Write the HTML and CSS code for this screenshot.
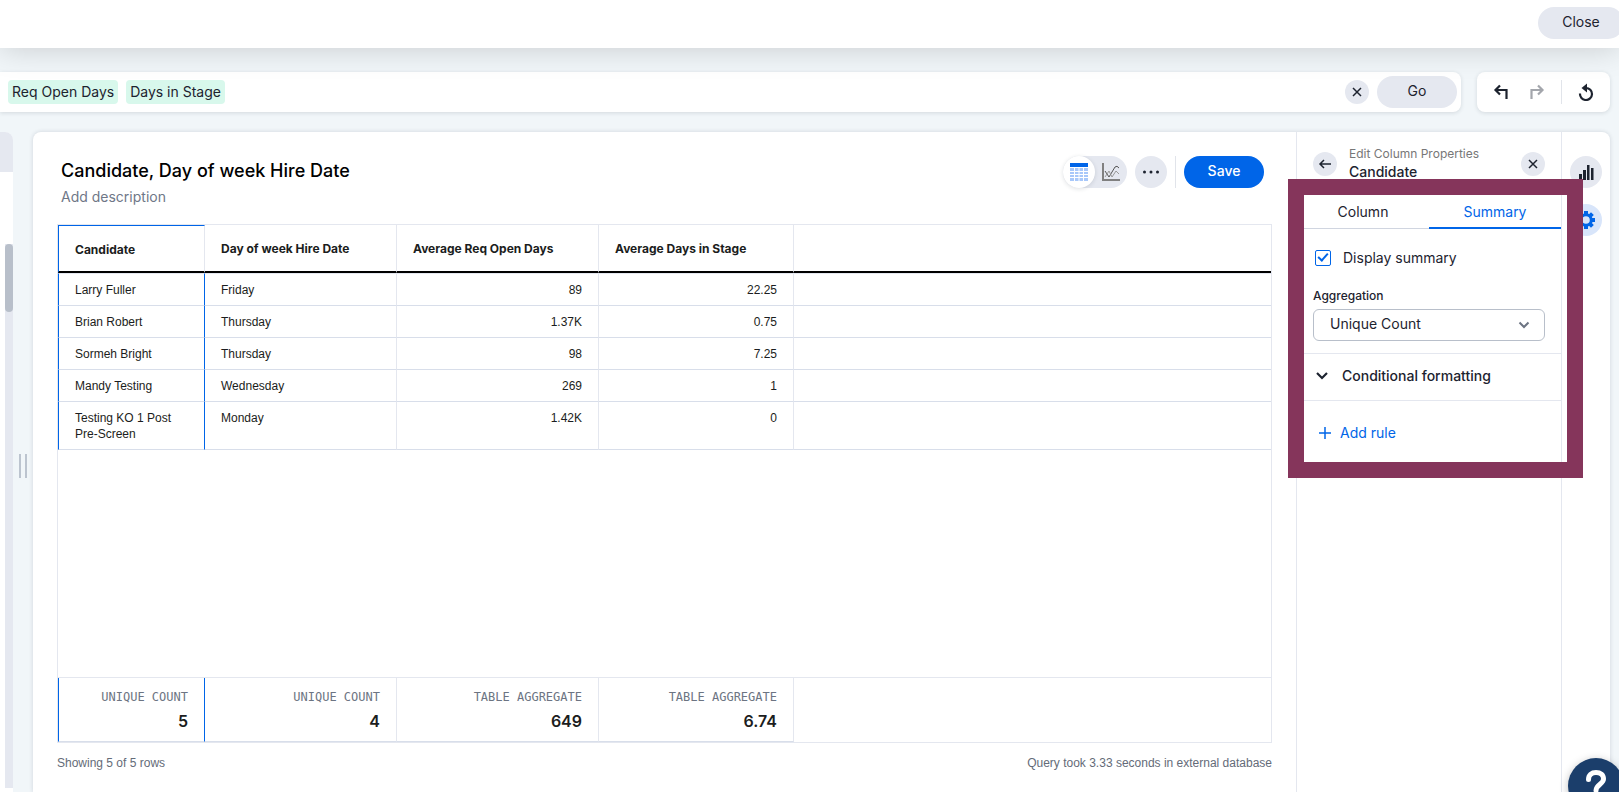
FILE: index.html
```html
<!DOCTYPE html>
<html lang="en">
<head>
	<meta charset="UTF-8">
	<meta name="viewport" content="width=device-width, initial-scale=1">
	<title>Candidate, Day of week Hire Date</title>
	<link rel="stylesheet" href="styles.css">
</head>
<body>
	<header class="topbar">
		<button class="btn btn-close" type="button">Close</button>
	</header>

	<div class="search-row">
		<div class="search-bar">
			<span class="chip">Req Open Days</span>
			<span class="chip">Days in Stage</span>
			<button class="round small push" type="button" aria-label="Clear">
				<svg width="12" height="12" viewBox="0 0 12 12"><path d="M2 2l8 8M10 2l-8 8"/></svg>
			</button>
			<button class="btn" type="button">Go</button>
		</div>
		<div class="history">
			<button class="plain" type="button" aria-label="Undo">
				<svg width="16" height="16" viewBox="0 0 16 16"><path class="thick" d="M13.500 15V6H3M7 1.500L2.500 6 7 10.500"/></svg>
			</button>
			<button class="plain faded" type="button" aria-label="Redo" disabled>
				<svg width="16" height="16" viewBox="0 0 16 16"><path class="thick" d="M2.500 15V6H13M9 1.500L13.500 6 9 10.500"/></svg>
			</button>
			<span class="rule"></span>
			<button class="plain" type="button" aria-label="Reset">
				<svg width="16" height="18" viewBox="0 0 16 18"><path class="thick" d="M2 10.500A6 6 0 1 0 8 5H7"/><path class="solid" d="M9 .5v9L3.500 5z"/></svg>
			</button>
		</div>
	</div>

	<main class="workspace">
		<aside class="data-panel">
			<div class="data-head"></div>
			<div class="data-search"></div>
			<div class="data-list"><span class="thumb"></span></div>
		</aside>
		<div class="grip"></div>

		<div class="card">
			<section class="answer">
				<div class="answer-head">
					<div class="titles">
						<h1>Candidate, Day of week Hire Date</h1>
						<p>Add description</p>
					</div>
					<div class="toggle">
						<button class="on" type="button" aria-label="Table view">
							<svg width="18" height="18" viewBox="0 0 18 18">
								<path class="cells" d="M0 5h18v13H0z"/>
								<path class="solid" d="M0 0h18v4H0z"/>
								<path class="grid-lines" d="M4.500 5v13M9 5v13M13.500 5v13M0 8.500h18M0 11.500h18M0 14.500h18"/>
							</svg>
						</button>
						<button type="button" aria-label="Chart view">
							<svg width="18" height="18" viewBox="0 0 18 18">
								<path class="axis" d="M1 0v17h17"/>
								<path class="trend" d="M3 8l4 6 6-10q2-2 4 1"/>
								<path class="trend light" d="M3 14l4-6 3 6 4-6 3 3"/>
							</svg>
						</button>
					</div>
					<button class="round" type="button" aria-label="More">
						<svg width="16" height="4" viewBox="0 0 16 4"><g class="solid"><circle cx="1.500" cy="2" r="1.500"/><circle cx="8" cy="2" r="1.500"/><circle cx="14.500" cy="2" r="1.500"/></g></svg>
					</button>
					<span class="rule tall"></span>
					<button class="btn primary" type="button">Save</button>
				</div>

				<div class="table-box">
					<table>
						<colgroup>
							<col class="c1"><col class="c2"><col class="c3"><col class="c4"><col>
						</colgroup>
						<thead>
							<tr><th class="picked">Candidate</th><th>Day of week Hire Date</th><th>Average Req Open Days</th><th>Average Days in Stage</th><td></td></tr>
						</thead>
						<tbody>
							<tr class="first"><td class="picked">Larry Fuller</td><td>Friday</td><td class="num">89</td><td class="num">22.25</td><td></td></tr>
							<tr><td class="picked">Brian Robert</td><td>Thursday</td><td class="num">1.37K</td><td class="num">0.75</td><td></td></tr>
							<tr><td class="picked">Sormeh Bright</td><td>Thursday</td><td class="num">98</td><td class="num">7.25</td><td></td></tr>
							<tr><td class="picked">Mandy Testing</td><td>Wednesday</td><td class="num">269</td><td class="num">1</td><td></td></tr>
							<tr><td class="picked">Testing KO 1 Post<br>Pre-Screen</td><td>Monday</td><td class="num">1.42K</td><td class="num">0</td><td></td></tr>
							<tr class="filler"><td colspan="5"></td></tr>
						</tbody>
						<tfoot>
							<tr>
								<td class="picked"><span>UNIQUE COUNT</span><strong>5</strong></td>
								<td><span>UNIQUE COUNT</span><strong>4</strong></td>
								<td><span>TABLE AGGREGATE</span><strong>649</strong></td>
								<td><span>TABLE AGGREGATE</span><strong>6.74</strong></td>
								<td></td>
							</tr>
						</tfoot>
					</table>
				</div>

				<div class="status">
					<span>Showing 5 of 5 rows</span>
					<span>Query took 3.33 seconds in external database</span>
				</div>
			</section>

			<aside class="props">
				<div class="props-head">
					<button class="round small" type="button" aria-label="Back">
						<svg width="14" height="12" viewBox="0 0 14 12"><path d="M13 6H2M6 2L2 6l4 4"/></svg>
					</button>
					<div class="props-title">
						<small>Edit Column Properties</small>
						<h2>Candidate</h2>
					</div>
					<button class="round small" type="button" aria-label="Close panel">
						<svg width="12" height="12" viewBox="0 0 12 12"><path d="M2 2l8 8M10 2l-8 8"/></svg>
					</button>
				</div>
				<div class="tabs" role="tablist">
					<button type="button" role="tab">Column</button>
					<button class="active" type="button" role="tab" aria-selected="true">Summary</button>
				</div>
				<div class="settings">
					<label class="check"><input type="checkbox" checked>Display summary</label>
					<label class="field-label" for="aggregation">Aggregation</label>
					<div class="select-box">
						<select id="aggregation"><option>Unique Count</option></select>
						<svg width="12" height="8" viewBox="0 0 12 8"><path d="M1.500 1.500l4.500 4.500 4.500-4.500"/></svg>
					</div>
				</div>
				<button class="section" type="button">
					<svg width="12" height="8" viewBox="0 0 12 8"><path class="thick" d="M1 1l5 5 5-5"/></svg>
					Conditional formatting
				</button>
				<button class="add" type="button">
					<svg width="14" height="14" viewBox="0 0 14 14"><path d="M7 1v12M1 7h12"/></svg>
					Add rule
				</button>
				<div class="highlight"></div>
			</aside>

			<nav class="rail">
				<button class="round" type="button" aria-label="Chart type">
					<svg width="16" height="16" viewBox="0 0 16 16"><path class="solid" d="M1 10h3v6H1zM5 6h3v10H5zM9 1h2.500v15H9zM13 4h2.500v12H13z"/></svg>
				</button>
				<button class="round selected" type="button" aria-label="Settings">
					<svg width="18" height="18" viewBox="0 0 18 18">
						<circle class="cog" cx="9" cy="9" r="5.300"/>
						<path class="cog teeth" d="M9 0v3M9 15v3M0 9h3M15 9h3M2.600 2.600l2.200 2.200M13.200 13.200l2.200 2.200M2.600 15.400l2.200-2.200M13.200 4.800l2.200-2.200"/>
					</svg>
				</button>
			</nav>
		</div>
	</main>

	<button class="help" type="button" aria-label="Help">
		<svg width="24" height="32" viewBox="0 0 24 32"><path d="M4.500 9.500C4.500 5 7.500 2.500 12 2.500s7.500 2.500 7.500 6.500c0 5-7.500 5.500-7.500 11.500"/><circle cx="12" cy="28" r="2.500"/></svg>
	</button>
</body>
</html>
```

FILE: styles.css
```css
*,*:after,*:before{box-sizing: border-box;}
html,body{height: 100%;}
body{
	margin: 0;
	display: flex;
	flex-direction: column;
	overflow: hidden;
	background-color: #f1f6f9;
	color: #1d232f;
	font: 14px/20px Inter, "Liberation Sans", sans-serif;
}
h1,h2,p{margin: 0;}
button{
	border: 0;
	padding: 0;
	background: none;
	color: inherit;
	font: inherit;
}
svg{
	display: block;
	flex: none;
	fill: none;
	stroke: currentColor;
	stroke-width: 1.5;
}
.thick{stroke-width: 2.2;}
.solid{fill: currentColor;stroke: none;}

/* buttons */
.btn{
	flex: none;
	min-width: 80px;
	height: 32px;
	padding: 0 20px 2px;
	border-radius: 16px;
	background-color: #e5e8f0;
}
.btn.primary{background-color: #0065e8;color: #fff;font-weight: 500;}
.round{
	flex: none;
	display: flex;
	align-items: center;
	justify-content: center;
	width: 32px;
	height: 32px;
	border-radius: 50%;
	background-color: #e5e8f0;
}
.round.small{width: 24px;height: 24px;}
.round.selected{background-color: #d8e5fa;color: #0065e8;}
.rule{flex: none;width: 1px;height: 24px;background-color: #e1e4ea;}
.rule.tall{height: 32px;}

/* top */
.topbar{
	position: relative;
	z-index: 2;
	flex: none;
	display: flex;
	justify-content: flex-end;
	height: 48px;
	padding-top: 7px;
	background-color: #fff;
	box-shadow: 0 0 32px rgba(0,0,0,.18);
}
.btn-close{width: 86px;margin-right: -5px;}
.search-row{
	flex: none;
	display: flex;
	gap: 16px;
	padding: 24px 9px 20px 0;
}
.search-bar,.history{
	display: flex;
	align-items: center;
	height: 40px;
	background-color: #fff;
	box-shadow: 0 1px 4px rgba(30,40,60,.14);
}
.search-bar{
	flex: 1;
	gap: 8px;
	padding: 0 4px 0 8px;
	border-radius: 0 8px 8px 0;
}
.push{margin-left: auto;}
.chip{
	height: 24px;
	padding: 0 4px;
	border-radius: 4px;
	background-color: #d8f8ec;
	line-height: 24px;
}
.history{
	gap: 16px;
	padding: 0 16px;
	border-radius: 8px;
}
.faded{margin-left: 4px;color: #a3a6ac;}

/* left panel */
.workspace{
	flex: 1;
	min-height: 0;
	display: flex;
}
.data-panel{
	flex: none;
	display: flex;
	flex-direction: column;
	width: 13px;
	border-radius: 0 8px 0 0;
	overflow: hidden;
	background-color: #fff;
}
.data-head{height: 40px;background-color: #e5e8f0;}
.data-search{height: 72px;}
.data-list{
	flex: 1;
	margin: 0 0 4px 5px;
	background-color: #e5e8f0;
}
.thumb{
	display: block;
	height: 68px;
	border-radius: 4px;
	background-color: #b8bfca;
}
.grip{
	align-self: center;
	flex: none;
	width: 8px;
	height: 24px;
	margin: 8px 6px 0;
	border: solid #bcc4cf;
	border-width: 0 2px;
}

/* card */
.card{
	flex: 1;
	min-width: 0;
	display: flex;
	margin-right: 9px;
	border-radius: 8px 8px 0 0;
	background-color: #fff;
	box-shadow: 0 0 4px rgba(30,40,60,.16);
}
.answer{
	flex: 1;
	min-width: 0;
	display: flex;
	flex-direction: column;
	padding: 24px 24px 0;
}
.answer-head{
	display: flex;
	gap: 8px;
	height: 68px;
	padding-right: 8px;
}
.titles{flex: 1;padding: 3px 4px;}
.titles p{color: #6f7787;}
h1{
	margin-bottom: 4px;
	color: #000;
	font-size: 18px;
	font-weight: 500;
	line-height: 24px;
}
.toggle{
	display: flex;
	width: 64px;
	height: 32px;
	border-radius: 16px;
	background-color: #e5e8f0;
}
.toggle button{
	display: flex;
	align-items: center;
	justify-content: center;
	width: 32px;
	height: 32px;
	border-radius: 50%;
}
.toggle .on{
	background-color: #fff;
	box-shadow: 0 1px 4px rgba(30,40,60,.14);
	color: #0065e8;
}
.cells{fill: #a8c8fa;stroke: none;}
.grid-lines{stroke: #fff;stroke-width: 1;}
.axis{stroke: #808080;stroke-width: 2;}
.trend{stroke: #555;stroke-width: 1;}
.trend.light{stroke: #999;}

/* table */
.table-box{
	flex: 1;
	min-height: 0;
	border: 1px solid #e4e7ef;
}
table{
	width: 100%;
	height: 100%;
	table-layout: fixed;
	border-spacing: 0;
	color: #1b1d20;
	font: 12px/16px "Liberation Sans", sans-serif;
}
.c1{width: 147px;}
.c2{width: 192px;}
.c3{width: 202px;}
.c4{width: 195px;}
th,td{
	padding: 8px 16px 7px;
	border-right: 1px solid #e4e7ef;
	border-bottom: 1px solid #d8deea;
	text-align: left;
	vertical-align: top;
}
th:last-child,td:last-child{border-right: 0;}
thead tr{height: 48px;}
thead th,thead td{
	vertical-align: middle;
	padding: 2px 16px 0;
	border-bottom: 2px solid #000;
	font-family: Inter, sans-serif;
	font-weight: 700;
}
tbody tr{height: 32px;}
.first td{border-top: 1px solid #e4e7ef;}
.num{text-align: right;}
.picked{border-left: 1px solid #0065e8;border-right-color: #0065e8;}
thead .picked{border-top: 1px solid #0065e8;border-right-color: #e4e7ef;}
.filler{height: auto;}
.filler td{padding: 0;border-bottom-color: #e4e7ef;}
tfoot tr{height: 64px;}
tfoot td{padding: 11px 16px 0;text-align: right;}
tfoot td:last-child{border-bottom: 0;}
tfoot span{
	display: block;
	color: #6c7482;
	font: 12px/16px "DejaVu Sans Mono", monospace;
}
tfoot strong{
	display: block;
	margin-top: 4px;
	font: 600 16px/24px Inter, sans-serif;
}
.status{
	flex: none;
	display: flex;
	justify-content: space-between;
	height: 49px;
	padding-top: 12px;
	color: #646b78;
	font: 12px/16px "Liberation Sans", sans-serif;
}

/* column properties */
.props{
	position: relative;
	flex: none;
	width: 265px;
	border-left: 1px solid #e4e7ef;
}
.props-head{
	display: flex;
	align-items: center;
	gap: 12px;
	padding: 14px 16px 10px;
}
.props-title{flex: 1;}
.props-title small{
	display: block;
	color: #777;
	font-size: 12px;
	line-height: 16px;
}
h2{
	font-size: 14px;
	font-weight: 500;
	line-height: 20px;
}
.tabs{
	display: flex;
	height: 37px;
	border-bottom: 1px solid #d0d5e0;
}
.tabs button{flex: 1;padding-top: 4px;}
.tabs .active{height: 37px;padding-top: 5px;border-bottom: 2px solid #0065e8;color: #0065e8;}
.settings{padding: 19px 16px 12px;border-bottom: 1px solid #e4e7ef;}
.check{
	display: flex;
	align-items: center;
	gap: 12px;
	padding-left: 2px;
}
.check input{
	appearance: none;
	display: flex;
	justify-content: center;
	width: 16px;
	height: 16px;
	margin: 0;
	border: 1px solid #0065e8;
	border-radius: 2px;
}
.check input:checked:after{
	content: "";
	width: 6px;
	height: 10px;
	border: solid #0065e8;
	border-width: 0 2px 2px 0;
	transform: rotate(42deg);
}
.field-label{
	display: block;
	margin: 18px 0 3px;
	font-size: 12px;
	font-weight: 500;
}
.select-box{position: relative;}
.select-box select{
	appearance: none;
	display: block;
	width: 100%;
	height: 32px;
	padding: 0 16px 2px;
	border: 1px solid #b8bfca;
	border-radius: 6px;
	background-color: #fff;
	color: inherit;
	font: inherit;
}
.select-box svg{
	position: absolute;
	right: 15px;
	top: 12px;
	color: #6c7482;
	stroke-width: 2;
	pointer-events: none;
}
.section{
	display: flex;
	align-items: center;
	gap: 14px;
	width: 100%;
	height: 47px;
	padding: 0 19px 2px;
	border-bottom: 1px solid #e4e7ef;
	font-weight: 500;
}
.add{
	display: flex;
	align-items: center;
	gap: 8px;
	margin: 22px 0 0 21px;
	color: #0065e8;
}
.highlight{
	position: absolute;
	left: -9px;
	right: -22px;
	top: 47px;
	height: 299px;
	border: 16px solid #85355b;
	pointer-events: none;
}
.rail{
	flex: none;
	display: flex;
	flex-direction: column;
	align-items: center;
	gap: 16px;
	width: 49px;
	padding-top: 24px;
	border-left: 1px solid #e4e7ef;
}
.cog{stroke-width: 3;}
.cog.teeth{stroke-width: 4;}

/* floating over the page corner */
.help{
	position: fixed;
	right: -5px;
	bottom: -22px;
	width: 56px;
	height: 56px;
	border-radius: 50%;
	background-color: #1b3e6b;
	box-shadow: 0 2px 8px rgba(0,0,0,.25);
	color: #fff;
}
.help svg{margin: auto;stroke-width: 5;stroke-linecap: round;}
.help circle{fill: currentColor;stroke: none;}
```
